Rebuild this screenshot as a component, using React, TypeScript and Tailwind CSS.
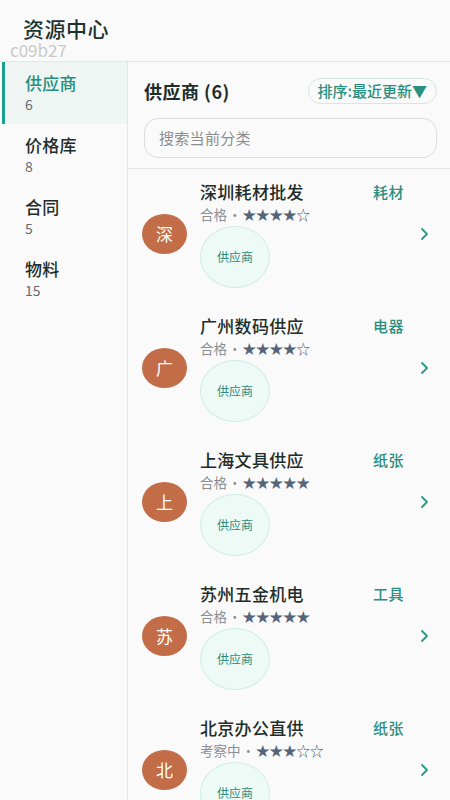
import React from 'react';

type Supplier = {
  name: string;
  tag: string;
  status: string;
  stars: number;
};

const categories = [
  { name: '供应商', count: 6 },
  { name: '价格库', count: 8 },
  { name: '合同', count: 5 },
  { name: '物料', count: 15 },
];

const suppliers: Supplier[] = [
  { name: '深圳耗材批发', tag: '耗材', status: '合格', stars: 4 },
  { name: '广州数码供应', tag: '电器', status: '合格', stars: 4 },
  { name: '上海文具供应', tag: '纸张', status: '合格', stars: 5 },
  { name: '苏州五金机电', tag: '工具', status: '合格', stars: 5 },
  { name: '北京办公直供', tag: '纸张', status: '考察中', stars: 3 },
];

const font = { fontFamily: '"Noto Sans CJK SC", "Noto Sans", sans-serif' };

const SupplierRow: React.FC<{ s: Supplier }> = ({ s }) => (
  <div className="flex items-center h-[134px] pl-[14px] pr-[20px] pb-[4px]">
    <div className="w-[45px] h-[40px] rounded-[50%] bg-[#c26d47] flex items-center justify-center text-white text-[17px] shrink-0">
      {s.name[0]}
    </div>
    <div className="flex-1 ml-[13px] flex flex-col">
      <div className="flex items-center justify-between h-[24px]">
        <span className="text-[17px] leading-[24px] font-medium text-[#1e2d2a] tracking-[0.3px]">{s.name}</span>
        <span className="text-[15px] leading-[24px] font-medium text-[#2a8f80] tracking-[0.5px]">{s.tag}</span>
      </div>
      <div className="h-[20px] flex items-center text-[13.5px] leading-[20px] text-[#8b8f93]">
        <span>{s.status}</span>
        <span className="mx-[1px]">·</span>
        <span className="text-[#56647a]">
          {'★'.repeat(s.stars)}
          {'☆'.repeat(5 - s.stars)}
        </span>
      </div>
      <div className="mt-[2px] w-[70px] h-[62px] rounded-[50%] bg-[#eefaf6] border border-[#cdeee2] flex items-center justify-center text-[12px] text-[#2f8a7c]">
        供应商
      </div>
    </div>
    <svg width="10" height="14" viewBox="0 0 10 14" className="ml-[16px] shrink-0">
      <path d="M2 2 L7 7 L2 12" fill="none" stroke="#2a9a88" strokeWidth="1.8" strokeLinecap="round" strokeLinejoin="round" />
    </svg>
  </div>
);

export default function App() {
  return (
    <div className="w-[450px] h-[800px] bg-[#fafafa] flex flex-col overflow-hidden" style={font}>
      <div className="h-[61px] pt-[16px] shrink-0">
        <div className="pl-[23px] text-[21px] leading-[24px] font-medium text-[#1c332f] tracking-[0.5px]">资源中心</div>
        <div className="pl-[10px] mt-[1px] text-[17px] leading-[17px] text-[#c9c9c9]">c09b27</div>
      </div>
      <div className="flex flex-1 border-t border-[#e6e6e6] min-h-0">
        <div className="w-[128px] shrink-0 border-r border-[#e4e4e4] bg-[#fafafa] pl-[2px]">
          {categories.map((c, i) => (
            <div
              key={c.name}
              className={`h-[62px] flex flex-col justify-center pl-[20px] border-l-[3px] ${
                i === 0 ? 'border-[#1aa08c] bg-[#eef5f2]' : 'border-transparent'
              }`}
            >
              <div className={`text-[17px] leading-[22px] font-medium tracking-[0.3px] ${i === 0 ? 'text-[#228f7f]' : 'text-[#1e2d2a]'}`}>
                {c.name}
              </div>
              <div className="text-[14px] leading-[20px] text-[#666a70]">{c.count}</div>
            </div>
          ))}
        </div>
        <div className="flex-1 flex flex-col min-w-0">
          <div className="pl-[16px] pr-[13px] pt-[16px] pb-[10px] border-b border-[#e6e6e6]">
            <div className="flex items-center justify-between h-[26px]">
              <span className="text-[18px] font-semibold text-[#1e2d2a] tracking-[0.5px]">供应商 (6)</span>
              <span className="h-[26px] px-[9px] rounded-full border border-[#d6e6e0] text-[15px] font-medium text-[#2a8f80] flex items-center">
                排序:最近更新▼
              </span>
            </div>
            <div className="mt-[14px] h-[40px] rounded-[14px] border border-[#dcdcdc] bg-[#fafafa] flex items-center px-[14px] text-[15px] text-[#8a8d90] tracking-[0.3px]">
              搜索当前分类
            </div>
          </div>
          <div className="flex-1 overflow-hidden">
            {suppliers.map((s) => (
              <SupplierRow key={s.name} s={s} />
            ))}
          </div>
        </div>
      </div>
    </div>
  );
}
